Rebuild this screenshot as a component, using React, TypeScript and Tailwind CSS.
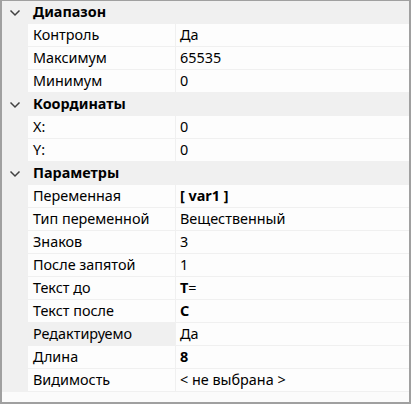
type Row = { label: string; value: React.ReactNode; hl?: boolean };
type Section = { title: string; rows: Row[] };

const sections: Section[] = [
  {
    title: "Диапазон",
    rows: [
      { label: "Контроль", value: "Да" },
      { label: "Максимум", value: "65535" },
      { label: "Минимум", value: "0" },
    ],
  },
  {
    title: "Координаты",
    rows: [
      { label: "X:", value: "0" },
      { label: "Y:", value: "0" },
    ],
  },
  {
    title: "Параметры",
    rows: [
      { label: "Переменная", value: <b>[ var1 ]</b> },
      { label: "Тип переменной", value: "Вещественный" },
      { label: "Знаков", value: "3" },
      { label: "После запятой", value: "1" },
      {
        label: "Текст до",
        value: (
          <>
            <b>T</b>=
          </>
        ),
      },
      { label: "Текст после", value: <b>C</b> },
      { label: "Редактируемо", value: "Да", hl: true },
      { label: "Длина", value: <b>8</b> },
      { label: "Видимость", value: "< не выбрана >" },
    ],
  },
];

function Chevron() {
  return (
    <svg width="12" height="8" viewBox="0 0 12 8" className="text-[#404040]">
      <path d="M1.5 1.5 L6 6 L10.5 1.5" fill="none" stroke="currentColor" strokeWidth="1.5" />
    </svg>
  );
}

export default function App() {
  return (
    <div
      className="flex h-[404px] w-[411px] flex-col border-t border-r-2 border-b-2 border-l-2 border-[#a0a0a0] bg-[#fbfbfb] text-[14.4px] text-black"
      style={{ fontFamily: '"Noto Sans", "Open Sans", sans-serif' }}
    >
      {sections.map((s) => (
        <div key={s.title} className="flex flex-col">
          <div className="flex h-[23px] items-center bg-[#f0f0f0]">
            <div className="flex w-[31px] justify-center pr-[6px]">
              <Chevron />
            </div>
            <span className="font-bold leading-none">{s.title}</span>
          </div>
          {s.rows.map((r) => (
            <div key={r.label} className="flex h-[23px]">
              <div className="w-[26px] bg-[#f0f0f0]" />
              <div
                className={`flex w-[148px] items-center border-r border-b border-[#f0f0f0] pl-[5px] leading-none ${
                  r.hl ? "bg-[#f0f0f0]" : "bg-[#fdfdfd]"
                }`}
              >
                {r.label}
              </div>
              <div className="flex flex-1 items-center border-b border-[#f0f0f0] bg-[#fdfdfd] pl-[4px] leading-none">
                {r.value}
              </div>
            </div>
          ))}
        </div>
      ))}
    </div>
  );
}
